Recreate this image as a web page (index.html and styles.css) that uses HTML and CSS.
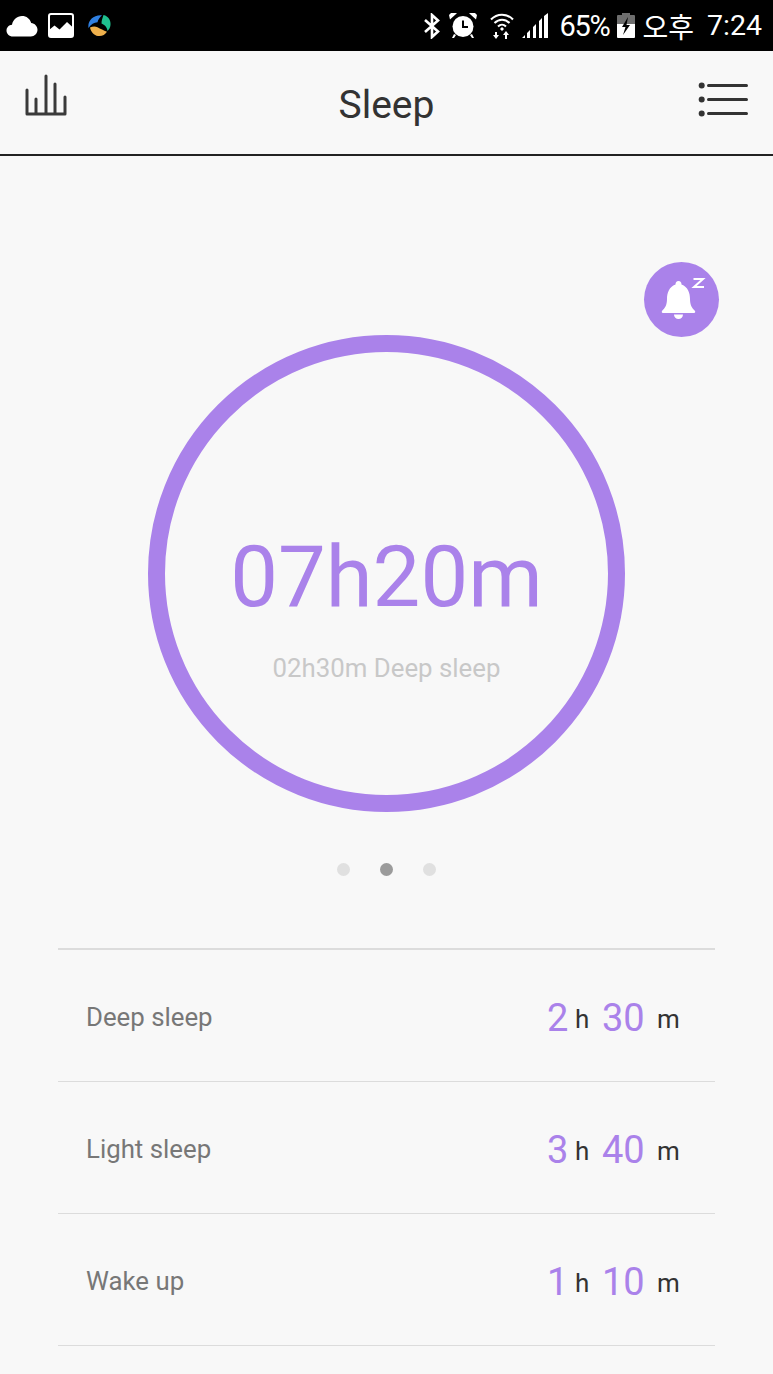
FILE: index.html
```html
<!DOCTYPE html>
<html lang="en">
<head>
<meta charset="utf-8">
<title>Sleep</title>
<link rel="stylesheet" href="styles.css">
</head>
<body>
<div class="status">
  <div class="status-left">
    <svg class="ic-cloud" width="32" height="22" viewBox="0 0 32 22"><path fill="#fff" d="M7 21.500C3 21.500.5 18.800.5 15.500.5 12.300 3 10 6 9.700 7 4.500 11 1 16 1c4.500 0 8 2.700 9.200 7 3.500.3 6.300 3.300 6.300 6.800 0 3.700-3 6.700-6.700 6.700z"/></svg>
    <svg class="ic-pic" width="26" height="25" viewBox="0 0 26 25"><rect x="1" y="1" width="24" height="23" rx="2" fill="#000" stroke="#fff" stroke-width="2"/><path fill="#fff" d="M1 24v-7l5.500-4.500 5 4 7.500-7.500 6 5.500V24z"/></svg>
    <svg class="ic-wheel" width="23" height="23" viewBox="0 0 23 23"><path fill="#2f7fe0" d="M.5 14C-.7 7 5 .5 14 1.300c-2 2-4 4-4.500 7C6 8.300 3 10.500.5 14z"/><path fill="#1fc08f" d="M15.500 1C20.500 2.300 23 6.500 22.500 11c-.2 2.500-1.500 4.500-3 6-.3-3-2-6-6-7.500 0-3 1-5.500 2-8.500z"/><path fill="#eeb04c" d="M2 13.500c2.500-1 5-1.500 7.500-.2 3 1.700 6 3 9.500 4.500-2 3-5 4.700-9 4.200C6 21.500 3 18 2 13.500z"/></svg>
  </div>
  <div class="status-right">
    <svg class="ic-bt" width="18" height="26" viewBox="0 0 18 26"><path fill="none" stroke="#fff" stroke-width="2.600" d="M2 7l13 11.500L9 24V2l6 5.500L2 19"/></svg>
    <svg class="ic-alarm" width="28" height="27" viewBox="0 0 28 27"><circle cx="14" cy="14.500" r="10.500" fill="#fff"/><path fill="none" stroke="#000" stroke-width="2" d="M14 8.500v6.500h5"/><path fill="#fff" d="M1 7.500 6.500 2.500 8 1H2L0 3zM27 7.500 21.500 2.500 20 1h6l2 2zM5 22l-2 4h2l2-3zM23 22l2 4h-2l-2-3z"/></svg>
    <svg class="ic-wifi" width="24" height="27" viewBox="0 0 24 27"><g fill="none" stroke="#fff" stroke-width="2"><path d="M1 7.500C7 1 17 1 23 7.500"/><path d="M4.500 11C9 6.500 15 6.500 19.500 11"/><path d="M8 14.500c2.500-2.500 5.500-2.500 8 0"/></g><path fill="#fff" d="M12 15l2 2-2 2-2-2zM5 20h2v3h2l-3 4-3-4h2zM17 27h-2v-4h-2l3-4 3 4h-2z"/></svg>
    <svg class="ic-signal" width="26" height="26" viewBox="0 0 26 26"><path fill="#fff" d="M0 25l3-3v3zM5 25v-5l3-3v8zM11 25V14l3-3v14zM17 25V8l3-3v20zM22 25V3l4-3v25z"/></svg>
    <span class="pct">65%</span>
    <svg class="ic-batt" width="18" height="25" viewBox="0 0 18 25"><path fill="#6e6e6e" d="M5 0h8v2h4a1 1 0 0 1 1 1v8H0V3a1 1 0 0 1 1-1h4z"/><path fill="#fff" d="M0 11h18v13a1 1 0 0 1-1 1H1a1 1 0 0 1-1-1z"/><path fill="#000" d="M11 4 5 14h3.500L6 22l7-10H9.500z"/></svg>
    <span class="ampm">오후</span>
    <span class="clock">7:24</span>
  </div>
</div>

<header class="topbar">
  <svg class="ic-chart" width="42" height="42" viewBox="0 0 42 42"><path fill="none" stroke="#3a3a3a" stroke-width="3" stroke-linecap="round" stroke-linejoin="round" d="M2 16v24h38V23M11 25v15M21 2v38M30 10v30"/></svg>
  <h1 class="title">Sleep</h1>
  <svg class="ic-list" width="50" height="36" viewBox="0 0 50 36"><g fill="#333"><circle cx="3.700" cy="3.500" r="3"/><circle cx="3.700" cy="17.500" r="3"/><circle cx="3.700" cy="31.500" r="3"/></g><g stroke="#333" stroke-width="3" stroke-linecap="round"><path d="M10.500 3.500h38M10.500 17.500h38M10.500 31.500h38"/></g></svg>
</header>

<main class="hero">
  <div class="alarm-btn">
    <svg width="75" height="75" viewBox="0 0 75 75"><path fill="#fff" d="M34.500 19c2 0 3 1.500 3 3.500C44 25 46 31 46 37c0 6 2 9 5 12 .5.800.3 2-1 2H19c-1.300 0-1.500-1.200-1-2 3-3 5-6 5-12 0-6 2-12 8.500-14.500 0-2 1-3.500 3-3.500z"/><path fill="#fff" d="M30 52.500h9a4.500 4.500 0 0 1-9 0z"/><path fill="none" stroke="#fff" stroke-width="2" d="M49.500 17h9.500L50 25h10"/></svg>
  </div>
  <div class="ring">
    <div class="total">07h20m</div>
    <div class="sub">02h30m Deep sleep</div>
  </div>
  <div class="dots">
    <span class="dot"></span>
    <span class="dot dot-on"></span>
    <span class="dot"></span>
  </div>
</main>

<section class="rows">
  <div class="row">
    <span class="label">Deep sleep</span>
    <span class="value"><b class="num num-h">2</b><i class="unit unit-h">h</i><b class="num num-m">30</b><i class="unit">m</i></span>
  </div>
  <div class="row">
    <span class="label">Light sleep</span>
    <span class="value"><b class="num num-h">3</b><i class="unit unit-h">h</i><b class="num num-m">40</b><i class="unit">m</i></span>
  </div>
  <div class="row">
    <span class="label">Wake up</span>
    <span class="value"><b class="num num-h">1</b><i class="unit unit-h">h</i><b class="num num-m">10</b><i class="unit">m</i></span>
  </div>
</section>
</body>
</html>
```

FILE: styles.css
```css
* { box-sizing: border-box; }
html, body { margin: 0; padding: 0; }
body {
  width: 773px;
  height: 1374px;
  overflow: hidden;
  background: #f8f8f8;
  font-family: Roboto, "Noto Sans CJK KR", sans-serif;
}

.status {
  height: 51px;
  background: #000;
  color: #fff;
  display: flex;
  justify-content: space-between;
  align-items: center;
  padding: 0 11px 0 6px;
}
.status-left { display: flex; align-items: center; }
.status-left svg, .status-right svg { display: block; flex: none; }
.ic-pic { margin-left: 10px; }
.ic-wheel { margin-left: 14px; }
.status-right { display: flex; align-items: center; }
.ic-alarm { margin-left: 8px; }
.ic-wifi { margin-left: 13px; }
.ic-signal { margin-left: 8px; }
.pct { font-size: 29px; margin-left: 12px; letter-spacing: -1.300px; }
.ic-batt { margin-left: 7px; }
.ampm { font-family: "Noto Sans CJK KR", sans-serif; font-size: 28px; margin-left: 8px; line-height: 1; }
.clock { font-size: 28.500px; margin-left: 13px; }

.topbar {
  height: 105px;
  border-bottom: 2px solid #222;
  display: flex;
  align-items: flex-start;
  justify-content: space-between;
  padding: 24px 25px 0;
}
.title {
  margin: 7px 0 0 8px;
  font-size: 39px;
  font-weight: 400;
  color: #333;
  line-height: 46px;
}
.ic-chart { margin-top: -1px; }
.ic-list { margin-top: 7px; }

.hero {
  position: relative;
  height: 792px;
  display: flex;
  flex-direction: column;
  align-items: center;
  padding-top: 179px;
}
.alarm-btn {
  position: absolute;
  left: 644px;
  top: 106px;
  width: 75px;
  height: 75px;
  border-radius: 50%;
  background: #aa82ea;
}
.alarm-btn svg { display: block; }
.ring {
  width: 477px;
  height: 477px;
  border: 17px solid #aa82ea;
  border-radius: 50%;
  display: flex;
  flex-direction: column;
  align-items: center;
  flex: none;
}
.total {
  margin-top: 175px;
  font-size: 85px;
  line-height: 100px;
  color: #aa82ea;
}
.sub {
  margin-top: 26px;
  font-size: 25.800px;
  line-height: 30px;
  color: #c8c8c8;
}
.dots { display: flex; gap: 30px; margin-top: 51px; }
.dot { width: 13px; height: 13px; border-radius: 50%; background: #e0e0e0; }
.dot-on { background: #9b9b9b; }

.rows {
  margin: 0 58px;
  border-top: 2px solid #dcdcdc;
}
.row {
  height: 132px;
  border-bottom: 1px solid #dcdcdc;
  display: flex;
  justify-content: space-between;
  align-items: center;
  padding: 0 32px 0 28px;
}
.label { font-size: 25.800px; color: #777; margin-top: 3px; }
.value { display: block; margin-top: 6px; white-space: nowrap; }
.num { display: inline-block; font-weight: 400; font-size: 38px; color: #aa82ea; line-height: 44px; }
.unit { display: inline-block; width: 26px; font-style: normal; font-size: 26px; color: #333; line-height: 44px; vertical-align: 3px; }
.unit-h { width: 27px; }
.num-h { width: 28px; }
.num-m { width: 55px; }
```
